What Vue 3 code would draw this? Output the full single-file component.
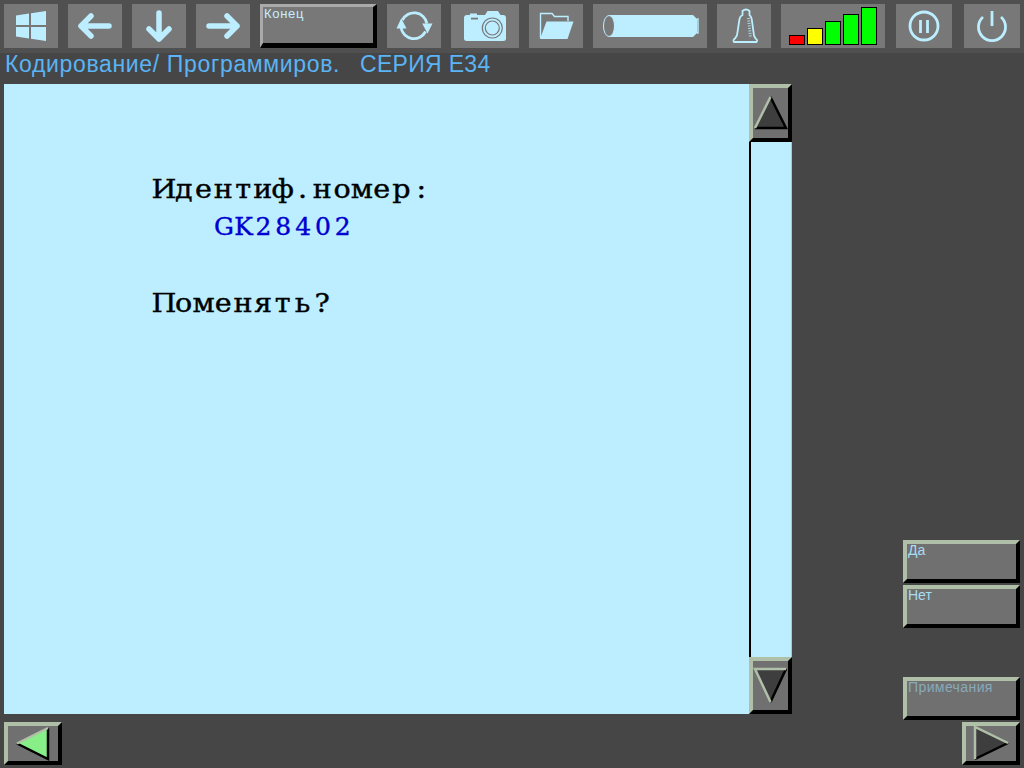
<script setup>
const bars = [10, 17, 24, 31, 38]
const barColor = (i) => (i === 0 ? '#ff0000' : i === 1 ? '#ffff00' : '#00ff00')
const chars = (s) => Array.from(s)
</script>

<template>
  <div class="screen">
    <header class="toolbar">
      <div class="tool w54">
        <svg viewBox="0 0 54 44" class="ico"><path class="fill" d="M12 11.5 25 9.5V21H12ZM27 9.2 42 7V21H27ZM12 23H25V34.5L12 32.6ZM27 23H42V37L27 34.8Z" /></svg>
      </div>
      <div class="tool w54">
        <svg viewBox="0 0 54 44" class="ico"><path class="arrow" d="M41 22H13M23 12 13 22 23 32" /></svg>
      </div>
      <div class="tool w54">
        <svg viewBox="0 0 54 44" class="ico"><path class="arrow" d="M27 9V35M17 25 27 35 37 25" /></svg>
      </div>
      <div class="tool w54">
        <svg viewBox="0 0 54 44" class="ico"><path class="arrow" d="M13 22H41M31 12 41 22 31 32" /></svg>
      </div>
      <div class="bevel end-btn">Конец</div>
      <div class="tool w54">
        <svg viewBox="0 0 54 44" class="ico">
          <path class="line" d="M15.500 16A13 13 0 0 1 39.900 19.500" />
          <path class="line" d="M38.500 27.500A13 13 0 0 1 14.100 24" />
          <path class="fill" d="M14.200 14.300 19.500 24.500H9.500ZM40.500 29.500 35.200 19.500H45.500Z" />
        </svg>
      </div>
      <div class="tool w68">
        <svg viewBox="0 0 68 44" class="ico">
          <path class="fill" d="M13 14Q13 11 16 11H19V9.500H26V11H34L36.500 7H47L49.500 11H52Q55 11 55 14V34.500Q55 37 52 37H16Q13 37 13 34.500Z" />
          <rect x="20" y="13.700" width="7" height="1.800" class="cut" />
          <circle cx="41.300" cy="24" r="10" class="fill lens" />
          <circle cx="41.300" cy="24" r="7" class="fill lens" />
        </svg>
      </div>
      <div class="tool w54">
        <svg viewBox="0 0 54 44" class="ico">
          <path class="thin" d="M11.500 34V9.500H23L25.500 12.500H39V17" />
          <path class="fill" d="M11 35 17.500 17.500H44.500L38.500 35Z" />
        </svg>
      </div>
      <div class="tool w114">
        <svg viewBox="0 0 114 44" class="ico">
          <path class="fill" d="M16 11H100L104 15V29L100 33H16Z" />
          <path class="thin" d="M104 15H105V29H104" />
          <ellipse cx="16" cy="22" rx="5.500" ry="10.500" class="cyl" />
        </svg>
      </div>
      <div class="tool w54">
        <svg viewBox="0 0 54 44" class="ico">
          <path class="rubber" d="M17 38H39.500Q41 36 38.500 34.500 36.500 32 36.500 28L34.700 15Q34 12 32.500 11V7Q29 4 25.500 7V11Q23 12 22.500 15L20.500 28Q20.500 32 18 34.500 15.500 36 17 38Z" />
          <path class="dots" d="M31.500 14 33.500 34" />
        </svg>
      </div>
      <div class="tool signal">
        <span v-for="(h, i) in bars" :key="i" class="bar" :style="{ height: h + 'px', background: barColor(i) }"></span>
      </div>
      <div class="tool w56 pause">
        <svg viewBox="0 0 56 44" class="ico">
          <circle cx="28" cy="22" r="14" class="line" />
          <path class="line" d="M24.500 16V29M31.500 16V29" />
        </svg>
      </div>
      <div class="tool w56 power">
        <svg viewBox="0 0 56 44" class="ico">
          <path class="line" d="M19 13A13.500 13.500 0 1 0 37 13M28 7V22" />
        </svg>
      </div>
    </header>

    <div class="title"><span>Кодирование/ Программиров.</span><span class="series">СЕРИЯ Е34</span></div>

    <main class="main">
      <section class="panel">
        <div class="text">
          <div class="row"><span v-for="(c, i) in chars('Идентиф.номер:')" :key="i" class="cell">{{ c }}</span></div>
          <div class="row blue"><span v-for="(c, i) in chars('GK28402')" :key="i" class="cell">{{ c }}</span></div>
          <div class="row spaced"><span v-for="(c, i) in chars('Поменять?')" :key="i" class="cell">{{ c }}</span></div>
        </div>
      </section>
      <div class="scroll">
        <div class="bevel face scroll-btn">
          <svg viewBox="0 0 35 50" class="tri">
            <path class="tri-fill" d="M17.500 9 33 40H2Z" />
            <path class="edge-dark" d="M17.500 9 33 40H2" />
            <path class="edge-light" d="M2 40 17.500 9" />
          </svg>
        </div>
        <div class="track"></div>
        <div class="bevel face scroll-btn">
          <svg viewBox="0 0 35 49" class="tri">
            <path class="tri-fill" d="M2 8H33L17.500 41Z" />
            <path class="edge-dark" d="M33 8 17.500 41" />
            <path class="edge-light" d="M17.500 41 2 8H33" />
          </svg>
        </div>
      </div>
      <aside class="side">
        <div class="bevel face side-btn">Да</div>
        <div class="bevel face side-btn">Нет</div>
        <div class="bevel face side-btn disabled">Примечания</div>
      </aside>
    </main>

    <footer class="footer">
      <div class="bevel face nav">
        <svg viewBox="0 0 50 35" class="tri">
          <path class="tri-green" d="M9 17.500 40 2V33Z" />
          <path class="edge-dark" d="M40 2V33L9 17.500" />
          <path class="edge-light" d="M9 17.500 40 2" />
        </svg>
      </div>
      <div class="bevel face nav">
        <svg viewBox="0 0 50 35" class="tri">
          <path class="tri-fill" d="M9 1 42 17 9 33Z" />
          <path class="edge-dark" d="M42 17 9 33" />
          <path class="edge-light" d="M9 33V1L42 17" />
        </svg>
      </div>
    </footer>
  </div>
</template>

<style scoped>
.screen {
  width: 1024px;
  height: 768px;
  background: #464646;
  display: flex;
  flex-direction: column;
  overflow: hidden;
  font-family: "Liberation Sans", Arial, sans-serif;
}
.toolbar {
  height: 53px;
  box-sizing: border-box;
  padding: 4px 4px 5px;
  background: #505050;
  display: flex;
  gap: 10px;
}
.tool {
  height: 44px;
  background: #787878;
  flex: none;
}
.w54 { width: 54px; }
.w56 { width: 56px; }
.w68 { width: 68px; }
.w114 { width: 114px; }
.pause { margin-left: 1px; }
.power { margin-left: 2px; }
.ico { display: block; width: 100%; height: 100%; }
.fill { fill: #bdeeff; stroke: none; }
.arrow {
  fill: none;
  stroke: #bdeeff;
  stroke-width: 5.5;
  stroke-linecap: round;
  stroke-linejoin: round;
}
.line {
  fill: none;
  stroke: #bdeeff;
  stroke-width: 2.8;
}
.thin {
  fill: none;
  stroke: #bdeeff;
  stroke-width: 1.4;
}
.rubber {
  fill: none;
  stroke: #bdeeff;
  stroke-width: 1.8;
}
.dots {
  fill: none;
  stroke: #bdeeff;
  stroke-width: 3;
  stroke-dasharray: 1 1.500;
  opacity: 0.8;
}
.cut { fill: #787878; }
.lens { stroke: #787878; stroke-width: 1.200; }
.cyl { fill: #787878; stroke: #bdeeff; stroke-width: 1; }
.signal {
  width: 104px;
  box-sizing: border-box;
  padding: 0 8px 3px;
  display: flex;
  align-items: flex-end;
  gap: 2px;
}
.bar {
  width: 16px;
  box-sizing: border-box;
  border: 1px solid #000;
}
.bevel {
  box-sizing: border-box;
  border-style: solid;
  flex: none;
}
.end-btn {
  width: 117px;
  height: 44px;
  background: #787878;
  border-width: 3px 4px 5px 3px;
  border-color: #aaaaaa #000 #000 #aaaaaa;
  color: #c4f0ff;
  font-size: 13px;
  line-height: 14px;
  letter-spacing: 0.7px;
  padding-left: 1px;
}
.title {
  height: 31px;
  box-sizing: border-box;
  padding-left: 5px;
  display: flex;
  gap: 20px;
  font-size: 23px;
  line-height: 22px;
  letter-spacing: 0.65px;
  color: #5ab4f5;
  white-space: nowrap;
}
.series { letter-spacing: 0.3px; }
.main {
  display: flex;
  height: 634px;
  padding-left: 4px;
}
.panel {
  width: 745px;
  height: 630px;
  background: #bdeeff;
  box-sizing: border-box;
  padding: 86px 0 0 150px;
}
.text {
  font-family: "DejaVu Serif", "Liberation Serif", serif;
  font-size: 26px;
  line-height: 38px;
  color: #000;
  -webkit-text-stroke: 0.4px currentColor;
}
.row {
  display: flex;
  height: 38px;
  transform: scaleX(1.1);
  transform-origin: left center;
}
.cell {
  width: 18px;
  flex: none;
  display: flex;
  justify-content: center;
}
.blue {
  color: #0000d0;
  font-size: 25px;
  padding-left: 60px;
  transform: none;
}
.blue .cell { width: 19.800px; }
.spaced { margin-top: 38px; }
.scroll {
  width: 43px;
  height: 630px;
  display: flex;
  flex-direction: column;
  flex: none;
}
.face {
  background: #707070;
  border-width: 4px;
  border-color: #b0c0a8 #000 #000 #b0c0a8;
}
.scroll-btn {
  width: 43px;
  height: 58px;
}
.scroll-btn + .track + .scroll-btn { height: 57px; }
.track {
  flex: 1;
  background: #bdeeff;
  border-left: 2px solid #000;
  border-right: 1px solid #b0c8b8;
}
.tri { display: block; width: 100%; height: 100%; }
.tri-fill { fill: #3e3e3e; }
.tri-green { fill: #88ee88; }
.edge-light, .edge-dark {
  fill: none;
  stroke-width: 2.5;
}
.edge-light { stroke: #b0c0a8; }
.edge-dark { stroke: #000; }
.side {
  flex: 1;
  padding: 456px 4px 0 111px;
  display: flex;
  flex-direction: column;
  gap: 2px;
}
.side-btn {
  height: 43px;
  color: #a8dcf0;
  font-size: 14px;
  line-height: 12px;
  padding-left: 1px;
}
.disabled {
  margin-top: 47px;
  color: #88aabb;
  letter-spacing: 0.4px;
}
.footer {
  display: flex;
  justify-content: space-between;
  padding: 4px 4px 0;
}
.nav {
  width: 58px;
  height: 43px;
}
</style>
